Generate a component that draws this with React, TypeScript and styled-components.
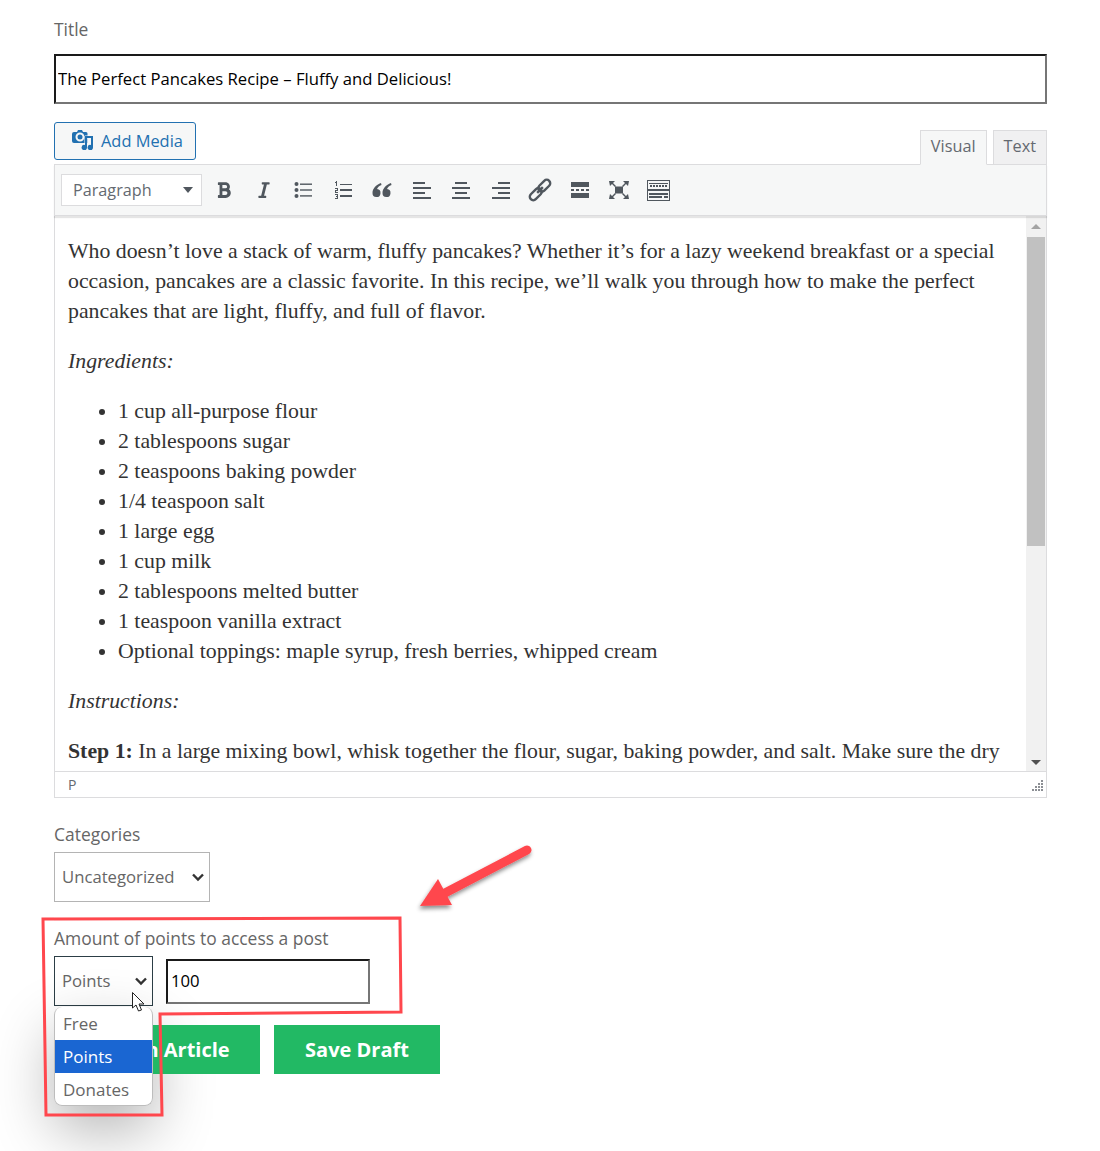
import React from "react";
import styled, { createGlobalStyle } from "styled-components";
import { FaBold, FaItalic } from "react-icons/fa";

const GlobalStyle = createGlobalStyle`
  html, body {
    margin: 0;
    padding: 0;
    background: #fff;
    overflow: hidden;
  }
  * { box-sizing: border-box; }
`;

const chevron = encodeURIComponent(
  `<svg xmlns="http://www.w3.org/2000/svg" width="14" height="10" viewBox="0 0 14 10"><path d="M2 2.500l5 5 5-5" fill="none" stroke="#333" stroke-width="2.400"/></svg>`,
);

const Page = styled.div`
  position: relative;
  width: 1100px;
  height: 1151px;
  overflow: hidden;
  padding: 17px 53px 0 54px;
  font-family: "Open Sans", sans-serif;
  color: #666;
`;

const Label = styled.div`
  font-size: 17.45px;
  line-height: 24px;
  color: #666;
`;

const TitleInput = styled.input`
  display: block;
  width: 100%;
  height: 50px;
  margin-top: 13px;
  padding: 0 2px 2px;
  border: 2px solid;
  border-color: #1a1a1a #767676 #767676 #1a1a1a;
  background: #fff;
  font: 16.67px "Open Sans", sans-serif;
  color: #000;
`;

const EditorHead = styled.div`
  display: flex;
  justify-content: space-between;
  align-items: flex-start;
  height: 42px;
  margin-top: 18px;
`;

const MediaButton = styled.button`
  display: flex;
  align-items: center;
  gap: 8px;
  width: 142px;
  height: 38px;
  padding: 0 0 2px 17px;
  border: 1px solid #2271b1;
  border-radius: 3px;
  background: #f6f7f7;
  color: #2271b1;
  font: 16.4px "Open Sans", sans-serif;
`;

const Tabs = styled.div`
  display: flex;
  align-self: flex-end;
  gap: 6px;
  position: relative;
  z-index: 1;
  margin-bottom: -1px;
`;

const Tab = styled.div<{ $active?: boolean }>`
  height: 35px;
  padding: 0 10px;
  border: 1px solid #dcdcde;
  border-bottom-color: ${p => (p.$active ? "#f6f7f7" : "#dcdcde")};
  background: ${p => (p.$active ? "#f6f7f7" : "#f0f0f1")};
  color: #646970;
  font-size: 16.3px;
  line-height: 30px;
`;

const Toolbar = styled.div`
  display: flex;
  align-items: center;
  height: 52px;
  padding: 0 0 0 6px;
  border: 1px solid #dcdcde;
  background: #f6f7f7;
  box-shadow: 0 2px 1px rgba(0, 0, 0, 0.1);
  position: relative;
`;

const FormatSelect = styled.div`
  display: flex;
  align-items: center;
  justify-content: space-between;
  width: 141px;
  height: 32px;
  margin-right: 2.5px;
  padding: 0 8px 1px 11px;
  border: 1px solid #dcdcde;
  background: #fff;
  color: #646970;
  font-size: 16.2px;
`;

const Caret = styled.span`
  width: 0;
  height: 0;
  border-left: 5px solid transparent;
  border-right: 5px solid transparent;
  border-top: 6px solid #50575e;
`;

const ToolButton = styled.span`
  display: flex;
  align-items: center;
  justify-content: center;
  width: 39.5px;
  height: 30px;
  color: #50575e;
`;

const EditorBody = styled.div`
  display: flex;
  height: 555px;
  border-left: 1px solid #dcdcde;
  border-right: 1px solid #dcdcde;
  background: #fff;
`;

const Content = styled.div`
  flex: 1;
  min-width: 0;
  overflow: hidden;
  padding: 20px 13px 0;
  font-family: "Liberation Serif", serif;
  font-size: 21.8px;
  line-height: 30px;
  color: #333;

  p {
    margin: 0 0 20px;
  }

  ul {
    margin: 0 0 20px;
    padding: 0 0 0 50px;
  }
`;

const Scrollbar = styled.div`
  display: flex;
  flex-direction: column;
  align-items: center;
  width: 20px;
  background: #f1f1f1;
  padding-bottom: 6px;
`;

const ArrowUp = styled.span`
  margin-top: 8px;
  border-left: 5px solid transparent;
  border-right: 5px solid transparent;
  border-bottom: 5px solid #a3a3a3;
`;

const Thumb = styled.span`
  width: 18px;
  height: 309px;
  margin-top: 8px;
  background: #c1c1c1;
`;

const ArrowDown = styled.span`
  margin-top: auto;
  border-left: 5px solid transparent;
  border-right: 5px solid transparent;
  border-top: 5px solid #505050;
`;

const StatusBar = styled.div`
  display: flex;
  align-items: center;
  justify-content: space-between;
  height: 27px;
  padding: 0 2px 0 13px;
  border: 1px solid #dcdcde;
  background: #fff;
  color: #646970;
  font-size: 14px;
`;

const CategoriesLabel = styled(Label)`
  margin-top: 24px;
`;

const NativeSelect = styled.select<{ $width: number; $dark?: boolean }>`
  display: block;
  width: ${p => p.$width}px;
  height: 50px;
  padding: 0 20px 2px 7px;
  border: 1px solid ${p => (p.$dark ? "#2c3e46" : "#b4b4b4")};
  border-radius: 0;
  appearance: none;
  background: #fff url("data:image/svg+xml,${chevron}") no-repeat right 4px center;
  color: #666;
  font: 16.7px "Open Sans", sans-serif;
`;

const CategoriesSelect = styled(NativeSelect)`
  margin-top: 6px;
`;

const AmountLabel = styled(Label)`
  margin-top: 24px;
`;

const AmountRow = styled.div`
  display: flex;
  align-items: center;
  gap: 13px;
  margin-top: 6px;
`;

const SelectWrap = styled.div`
  position: relative;
`;

const AmountInput = styled.input`
  width: 204px;
  height: 45px;
  padding: 0 3px 2px;
  border: 2px solid;
  border-color: #1a1a1a #767676 #767676 #1a1a1a;
  font: 16.7px "Open Sans", sans-serif;
  color: #000;
`;

const DropdownShadow = styled.div`
  position: absolute;
  z-index: 1;
  top: 51px;
  left: 0;
  width: 99px;
  height: 99px;
  border-radius: 8px;
  box-shadow: 0 24px 60px rgba(0, 0, 0, 0.3);
`;

const Dropdown = styled.div`
  position: absolute;
  z-index: 3;
  top: 51px;
  left: 0;
  width: 99px;
  height: 99px;
  overflow: hidden;
  border: 1px solid #bdbdbd;
  border-width: 0 1px 1px 1px;
  border-radius: 8px;
  background: #fff;
`;

const Option = styled.div<{ $selected?: boolean }>`
  height: 33px;
  padding-left: 8px;
  background: ${p => (p.$selected ? "#1a66d2" : "transparent")};
  color: ${p => (p.$selected ? "#fff" : "#666")};
  font-size: 17px;
  line-height: 33px;
`;

const Actions = styled.div`
  position: relative;
  z-index: 2;
  display: flex;
  gap: 14px;
  margin-top: 19px;
`;

const GreenButton = styled.button<{ $width: number }>`
  width: ${p => p.$width}px;
  height: 49px;
  padding: 0;
  border: 0;
  background: #22b964;
  color: #fff;
  font: 700 20px "Open Sans", sans-serif;
`;

const ArticleButton = styled(GreenButton)`
  padding-left: 3px;
`;

const Overlay = styled.svg`
  position: absolute;
  z-index: 4;
  top: 0;
  left: 0;
  pointer-events: none;
`;

const Resize = () => (
  <svg width="12" height="12" viewBox="0 0 12 12" fill="#8c8f94">
    <rect x="9" y="1" width="2" height="2" />
    <rect x="6" y="4" width="2" height="2" />
    <rect x="9" y="4" width="2" height="2" />
    <rect x="3" y="7" width="2" height="2" />
    <rect x="6" y="7" width="2" height="2" />
    <rect x="9" y="7" width="2" height="2" />
    <rect x="0" y="10" width="2" height="2" />
    <rect x="3" y="10" width="2" height="2" />
    <rect x="6" y="10" width="2" height="2" />
    <rect x="9" y="10" width="2" height="2" />
  </svg>
);

const MediaIcon = () => (
  <svg width="21" height="20" viewBox="0 0 21 20" fill="#2271b1">
    <path
      fillRule="evenodd"
      d="M2 2h3l1-2h4l1 2h3a1.500 1.500 0 0 1 1.500 1.500V13H2a2 2 0 0 1-2-2V4a2 2 0 0 1 2-2zm6 .500a4.500 4.500 0 1 0 0 9 4.500 4.500 0 0 0 0-9z"
    />
    <circle cx="8" cy="7" r="2.500" />
    <path
      d="M13 6h8v11.500a2.700 2.700 0 1 1-2-2.600V8h-4v9.500a2.700 2.700 0 1 1-2-2.600z"
      stroke="#f6f7f7"
      strokeWidth="1"
      paintOrder="stroke"
    />
  </svg>
);

const Bullets = () => (
  <svg width="18" height="18" viewBox="0 0 18 18" fill="#50575e">
    <circle cx="2.500" cy="3" r="2" />
    <circle cx="2.500" cy="9" r="2" />
    <circle cx="2.500" cy="15" r="2" />
    <rect x="6" y="2.500" width="12" height="1.400" />
    <rect x="6" y="8.300" width="12" height="1.400" />
    <rect x="6" y="14.200" width="12" height="1.400" />
  </svg>
);

const Numbers = () => (
  <svg width="18" height="18" viewBox="0 0 18 18" fill="#50575e" shapeRendering="crispEdges">
    <rect x="6" y="2.500" width="12" height="1.400" />
    <rect x="6" y="8.300" width="12" height="1.400" />
    <rect x="6" y="14.200" width="12" height="1.400" />
    <path d="M1 1l2-1v5H2V1.500L1 2z" />
    <path d="M0.500 7h3.500v3H1.500v1H4v1H0.500V9H3V8H0.500z" />
    <path d="M0.500 13H4v5H0.500v-1H3v-1H1.500v-1H3v-1H0.500z" />
  </svg>
);

const Quote = () => (
  <svg width="20" height="16" viewBox="0 0 20 16" fill="#50575e">
    <path d="M9 1C4 3 .5 6.500.5 11a4 4 0 1 0 4.500-3.900C5.500 5.500 7 4 9.500 3z" />
    <path d="M19 1c-5 2-8.500 5.500-8.500 10a4 4 0 1 0 4.500-3.900C15.500 5.500 17 4 19.500 3z" />
  </svg>
);

const Align = ({ kind }: { kind: "left" | "center" | "right" }) => {
  const x = (w: number) => (kind === "left" ? 0 : kind === "center" ? (18 - w) / 2 : 18 - w);
  return (
    <svg width="18" height="18" viewBox="0 0 18 18" fill="#50575e" shapeRendering="crispEdges">
      <rect x={x(12)} y="1" width="12" height="2" />
      <rect x={x(18)} y="6" width="18" height="2" />
      <rect x={x(12)} y="11" width="12" height="2" />
      <rect x={x(18)} y="16" width="18" height="2" />
    </svg>
  );
};

const LinkIcon = () => (
  <svg width="24" height="24" viewBox="0 0 24 24" fill="none" stroke="#50575e" strokeWidth="2.400">
    <g transform="rotate(-45 12 12)">
      <rect x="-1" y="8.500" width="14" height="7" rx="3.500" />
      <rect x="11" y="8.500" width="14" height="7" rx="3.500" />
      <path d="M8 12h8" />
    </g>
  </svg>
);

const MoreIcon = () => (
  <svg width="18" height="18" viewBox="0 0 18 18" fill="#50575e" shapeRendering="crispEdges">
    <rect x="0" y="1" width="18" height="5" />
    <rect x="0" y="8" width="3" height="2" />
    <rect x="5" y="8" width="3" height="2" />
    <rect x="10" y="8" width="3" height="2" />
    <rect x="15" y="8" width="3" height="2" />
    <rect x="0" y="12" width="18" height="5" />
  </svg>
);

const FullscreenIcon = () => (
  <svg width="22" height="20" viewBox="0 0 22 20" fill="#50575e">
    <rect x="7" y="6.500" width="8" height="7" />
    <path d="M1 1h6L5 3l3 3-1 1-3-3-2 2z" />
    <path d="M21 1h-6l2 2-3 3 1 1 3-3 2 2z" />
    <path d="M1 19h6l-2-2 3-3-1-1-3 3-2-2z" />
    <path d="M21 19h-6l2-2-3-3 1-1 3 3 2-2z" />
  </svg>
);

const KeyboardIcon = () => (
  <svg width="23" height="21" viewBox="0 0 23 21" fill="#50575e" shapeRendering="crispEdges">
    <path fillRule="evenodd" d="M0 0h23v21H0zM1 1v8h21V1zM1 11v9h21v-9z" />
    <path d="M2 3h19v1H2z" />
    <path d="M3 5h2v2H3zM6 5h2v2H6zM9 5h2v2H9zM12 5h2v2h-2zM15 5h2v2h-2zM18 5h2v2h-2z" />
    <path d="M2 13h19v2H2zM2 16h13v2H2zM17 16h4v2h-4z" />
  </svg>
);

const ingredients = [
  "1 cup all-purpose flour",
  "2 tablespoons sugar",
  "2 teaspoons baking powder",
  "1/4 teaspoon salt",
  "1 large egg",
  "1 cup milk",
  "2 tablespoons melted butter",
  "1 teaspoon vanilla extract",
  "Optional toppings: maple syrup, fresh berries, whipped cream",
];

export default function App() {
  return (
    <Page>
      <GlobalStyle />
      <Label>Title</Label>
      <TitleInput readOnly value="The Perfect Pancakes Recipe – Fluffy and Delicious!" />

      <EditorHead>
        <MediaButton>
          <MediaIcon />
          Add Media
        </MediaButton>
        <Tabs>
          <Tab $active>Visual</Tab>
          <Tab>Text</Tab>
        </Tabs>
      </EditorHead>

      <Toolbar>
        <FormatSelect>
          Paragraph
          <Caret />
        </FormatSelect>
        <ToolButton><FaBold size={18} /></ToolButton>
        <ToolButton><FaItalic size={18} /></ToolButton>
        <ToolButton><Bullets /></ToolButton>
        <ToolButton><Numbers /></ToolButton>
        <ToolButton><Quote /></ToolButton>
        <ToolButton><Align kind="left" /></ToolButton>
        <ToolButton><Align kind="center" /></ToolButton>
        <ToolButton><Align kind="right" /></ToolButton>
        <ToolButton><LinkIcon /></ToolButton>
        <ToolButton><MoreIcon /></ToolButton>
        <ToolButton><FullscreenIcon /></ToolButton>
        <ToolButton><KeyboardIcon /></ToolButton>
      </Toolbar>

      <EditorBody>
        <Content>
          <p>
            Who doesn’t love a stack of warm, fluffy pancakes? Whether it’s for a lazy weekend
            breakfast or a special occasion, pancakes are a classic favorite. In this recipe, we’ll
            walk you through how to make the perfect pancakes that are light, fluffy, and full of
            flavor.
          </p>
          <p><em>Ingredients:</em></p>
          <ul>
            {ingredients.map(item => (
              <li key={item}>{item}</li>
            ))}
          </ul>
          <p><em>Instructions:</em></p>
          <p>
            <strong>Step 1:</strong> In a large mixing bowl, whisk together the flour, sugar, baking
            powder, and salt. Make sure the dry
          </p>
        </Content>
        <Scrollbar>
          <ArrowUp />
          <Thumb />
          <ArrowDown />
        </Scrollbar>
      </EditorBody>
      <StatusBar>
        P
        <Resize />
      </StatusBar>

      <CategoriesLabel>Categories</CategoriesLabel>
      <CategoriesSelect $width={156} defaultValue="Uncategorized">
        <option>Uncategorized</option>
      </CategoriesSelect>

      <AmountLabel>Amount of points to access a post</AmountLabel>
      <AmountRow>
        <SelectWrap>
          <NativeSelect $width={99} $dark defaultValue="Points">
            <option>Free</option>
            <option>Points</option>
            <option>Donates</option>
          </NativeSelect>
          <DropdownShadow />
          <Dropdown>
            <Option>Free</Option>
            <Option $selected>Points</Option>
            <Option>Donates</Option>
          </Dropdown>
        </SelectWrap>
        <AmountInput readOnly value="100" />
      </AmountRow>

      <Actions>
        <ArticleButton $width={206}>Add An Article</ArticleButton>
        <GreenButton $width={166}>Save Draft</GreenButton>
      </Actions>

      <Overlay width="1100" height="1151" viewBox="0 0 1100 1151">
        <defs>
          <filter id="arrowShadow" x="-20%" y="-20%" width="140%" height="150%">
            <feDropShadow dx="-1" dy="3" stdDeviation="2" floodColor="#000" floodOpacity="0.45" />
          </filter>
        </defs>
        <path
          d="M43 919 L400 918 L401 1012 L160 1014 L162 1115 L46 1115 Z"
          fill="none"
          stroke="#ff474d"
          strokeWidth="3"
        />
        <g filter="url(#arrowShadow)" fill="#ff474d">
          <path d="M527 850 L445 893" stroke="#ff474d" strokeWidth="9" strokeLinecap="round" />
          <path d="M438 879 L420 906 L452 905 Z" />
        </g>
        <path
          d="M132.500 992.500 L132.500 1008 L136 1005 L138.500 1011 L141.500 1010 L139 1004 L144 1004 Z"
          fill="#fff"
          stroke="#222"
          strokeWidth="1"
        />
      </Overlay>
    </Page>
  );
}
